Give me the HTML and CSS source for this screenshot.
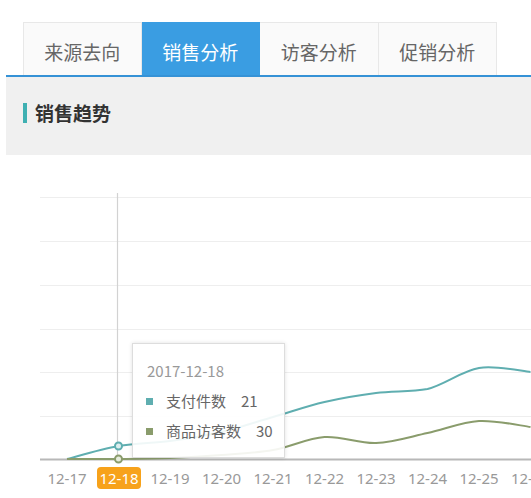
FILE: index.html
```html
<!DOCTYPE html>
<html lang="zh">
<head>
<meta charset="utf-8">
<title>销售分析</title>
<link rel="stylesheet" href="styles.css">
</head>
<body>
<div class="header">
  <div class="tabs">
    <div class="tab">来源去向</div>
    <div class="tab active">销售分析</div>
    <div class="tab">访客分析</div>
    <div class="tab">促销分析</div>
  </div>
  <div class="panel">
    <h2 class="title">销售趋势</h2>
  </div>
</div>
<div class="chart">
  <svg class="plot" width="531" height="343" viewBox="0 155 531 343" xmlns="http://www.w3.org/2000/svg">
    <g stroke="#eeeeee" stroke-width="1">
      <line x1="40" y1="197.5" x2="531" y2="197.5"/>
      <line x1="40" y1="241.5" x2="531" y2="241.5"/>
      <line x1="40" y1="285.5" x2="531" y2="285.5"/>
      <line x1="40" y1="329.5" x2="531" y2="329.5"/>
      <line x1="40" y1="372.5" x2="531" y2="372.5"/>
      <line x1="40" y1="416.5" x2="531" y2="416.5"/>
    </g>
    <line x1="117.5" y1="193" x2="117.5" y2="459" stroke="#d2d2d2" stroke-width="1.2"/>
    <line x1="40" y1="459.5" x2="531" y2="459.5" stroke="#b8b8b8" stroke-width="2"/>
    <path fill="none" stroke="#5faeb0" stroke-width="2" d="M67,459 C75.6,456.8 101.3,449 118.5,446 C135.7,443 152.8,443.3 170,441 C187.2,438.7 204.3,436 221.5,432 C238.7,428 255.8,422 273,417 C290.2,412 307.3,406 324.5,402 C341.7,398 358.8,395.2 376,393 C393.2,390.8 410.3,392.2 427.5,389 C444.7,384.8 461.8,370.8 479,368 C496.2,365.2 521.9,371.3 530.5,372"/>
    <path fill="none" stroke="#8a9c6c" stroke-width="2" d="M67,459 C75.6,459 101.3,459.2 118.5,459 C135.7,458.8 152.8,458.7 170,458 C187.2,457.3 204.3,456.3 221.5,455 C238.7,453.7 255.8,453 273,450 C290.2,447 307.3,438.2 324.5,437 C341.7,435.8 358.8,443.7 376,443 C393.2,442.3 410.3,436.7 427.5,433 C444.7,429.3 461.8,422 479,421 C496.2,420 521.9,426 530.5,427"/>
    <circle cx="118.5" cy="446" r="3.5" fill="#dcefef" stroke="#5faeb0" stroke-width="2"/>
    <circle cx="118.5" cy="459" r="3.5" fill="#e6ecdc" stroke="#8a9c6c" stroke-width="2"/>
    <rect x="97" y="467" width="44" height="22" rx="4" fill="#f7a21b"/>
    <g class="axis-label" text-anchor="middle">
      <text x="67" y="484">12-17</text>
      <text x="119" y="484" class="hl">12-18</text>
      <text x="170" y="484">12-19</text>
      <text x="221.5" y="484">12-20</text>
      <text x="273" y="484">12-21</text>
      <text x="324.5" y="484">12-22</text>
      <text x="376" y="484">12-23</text>
      <text x="427.5" y="484">12-24</text>
      <text x="479" y="484">12-25</text>
      <text x="530.5" y="484">12-26</text>
    </g>
  </svg>
  <div class="tooltip">
    <div class="tip-date">2017-12-18</div>
    <div class="tip-row"><span class="dot dot-teal"></span><span class="tip-name">支付件数</span><span class="tip-val">21</span></div>
    <div class="tip-row"><span class="dot dot-green"></span><span class="tip-name">商品访客数</span><span class="tip-val">30</span></div>
  </div>
</div>
</body>
</html>
```
FILE: styles.css
```css
html, body {
  margin: 0;
  padding: 0;
  background: #ffffff;
}
body {
  width: 531px;
  height: 498px;
  overflow: hidden;
  font-family: "Noto Sans CJK SC", "Noto Sans", sans-serif;
}
.header {
  margin-left: 6px;
  padding-top: 22px;
}
.tabs {
  display: flex;
  padding-left: 17px;
  border-bottom: 2px solid #3592d6;
}
.tab {
  width: 118.5px;
  height: 53px;
  box-sizing: border-box;
  display: flex;
  align-items: center;
  justify-content: center;
  padding-top: 4px;
  font-size: 19px;
  color: #666666;
  background: #fafafa;
  border: 1px solid #e8e8e8;
  border-bottom: none;
}
.tab + .tab {
  border-left: none;
}
.tab.active {
  background: #3a9de2;
  border-color: #3a9de2;
  color: #ffffff;
}
.panel {
  height: 78px;
  box-sizing: border-box;
  background: #f0f0f0;
  padding: 26px 0 0 17px;
}
.title {
  margin: 0;
  font-size: 19px;
  line-height: 20px;
  font-weight: bold;
  color: #333333;
  border-left: 4px solid #3fb0b2;
  padding-left: 8px;
}
.chart {
  position: relative;
  width: 531px;
  height: 343px;
}
.plot {
  display: block;
}
.axis-label text {
  font-family: "Noto Sans", "Noto Sans CJK SC", sans-serif;
  font-size: 15px;
  fill: #999999;
}
.axis-label text.hl {
  fill: #ffffff;
}
.tooltip {
  position: absolute;
  left: 132px;
  top: 188px;
  width: 153px;
  height: 115px;
  box-sizing: border-box;
  padding: 12px 0 0 13px;
  background: rgba(255, 255, 255, 0.9);
  border: 1px solid #dddddd;
  box-shadow: 0 0 4px rgba(0, 0, 0, 0.12);
  font-size: 15px;
}
.tip-date {
  line-height: 30px;
  color: #999999;
  padding-left: 1px;
}
.tip-row {
  display: flex;
  align-items: center;
  line-height: 30px;
  color: #666666;
}
.dot {
  width: 7px;
  height: 7px;
  margin-right: 13px;
}
.dot-teal {
  background: #5faeb0;
}
.dot-green {
  background: #8a9c6c;
}
.tip-val {
  margin-left: 15px;
}
```
